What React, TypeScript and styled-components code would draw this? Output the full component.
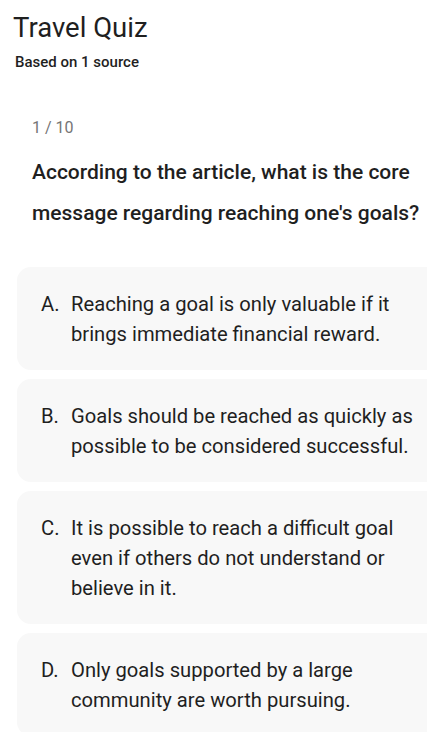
import React from "react";
import styled, { createGlobalStyle } from "styled-components";

const GlobalStyle = createGlobalStyle`
  html, body {
    margin: 0;
    padding: 0;
    background: #ffffff;
    overflow: hidden;
  }
  body {
    font-family: Roboto, "Noto Sans", Arial, sans-serif;
    color: #1f1f1f;
  }
`;

const Page = styled.div`
  width: 427px;
  height: 732px;
  overflow: hidden;
`;

const Header = styled.header`
  padding: 12px 0 0 13px;
`;

const Title = styled.h1`
  margin: 0;
  font-size: 27.5px;
  font-weight: 400;
  line-height: 32px;
  color: #1f1f1f;
`;

const Subtitle = styled.div`
  margin: 8px 0 0 2px;
  font-size: 15px;
  font-weight: 500;
  line-height: 20px;
  color: #1f1f1f;
`;

const QuestionBlock = styled.section`
  padding: 46px 0 0 32px;
`;

const Counter = styled.div`
  font-size: 16px;
  line-height: 20px;
  color: #757575;
`;

const Question = styled.p`
  margin: 14px 0 0;
  font-size: 21px;
  font-weight: 500;
  line-height: 41px;
  color: #1f1f1f;
`;

const Options = styled.ol`
  list-style: none;
  margin: 33px 0 0 17px;
  padding: 0;
  display: flex;
  flex-direction: column;
  gap: 9px;
  width: 440px;
`;

const Option = styled.li`
  display: flex;
  padding: 21.5px 24px;
  background: #f8f8f8;
  border-radius: 14px;
  font-size: 20.2px;
  line-height: 30px;
  color: #1f1f1f;
`;

const Letter = styled.span`
  flex: 0 0 30px;
`;

const OptionText = styled.span`
  width: 350px;
`;

const options = [
  { letter: "A.", text: "Reaching a goal is only valuable if it brings immediate financial reward." },
  { letter: "B.", text: "Goals should be reached as quickly as possible to be considered successful." },
  { letter: "C.", text: "It is possible to reach a difficult goal even if others do not understand or believe in it." },
  { letter: "D.", text: "Only goals supported by a large community are worth pursuing." },
];

export default function App() {
  return (
    <Page>
      <GlobalStyle />
      <Header>
        <Title>Travel Quiz</Title>
        <Subtitle>Based on 1 source</Subtitle>
      </Header>
      <QuestionBlock>
        <Counter>1 / 10</Counter>
        <Question>
          According to the article, what is the core message regarding reaching one's goals?
        </Question>
      </QuestionBlock>
      <Options>
        {options.map((o) => (
          <Option key={o.letter}>
            <Letter>{o.letter}</Letter>
            <OptionText>{o.text}</OptionText>
          </Option>
        ))}
      </Options>
    </Page>
  );
}
